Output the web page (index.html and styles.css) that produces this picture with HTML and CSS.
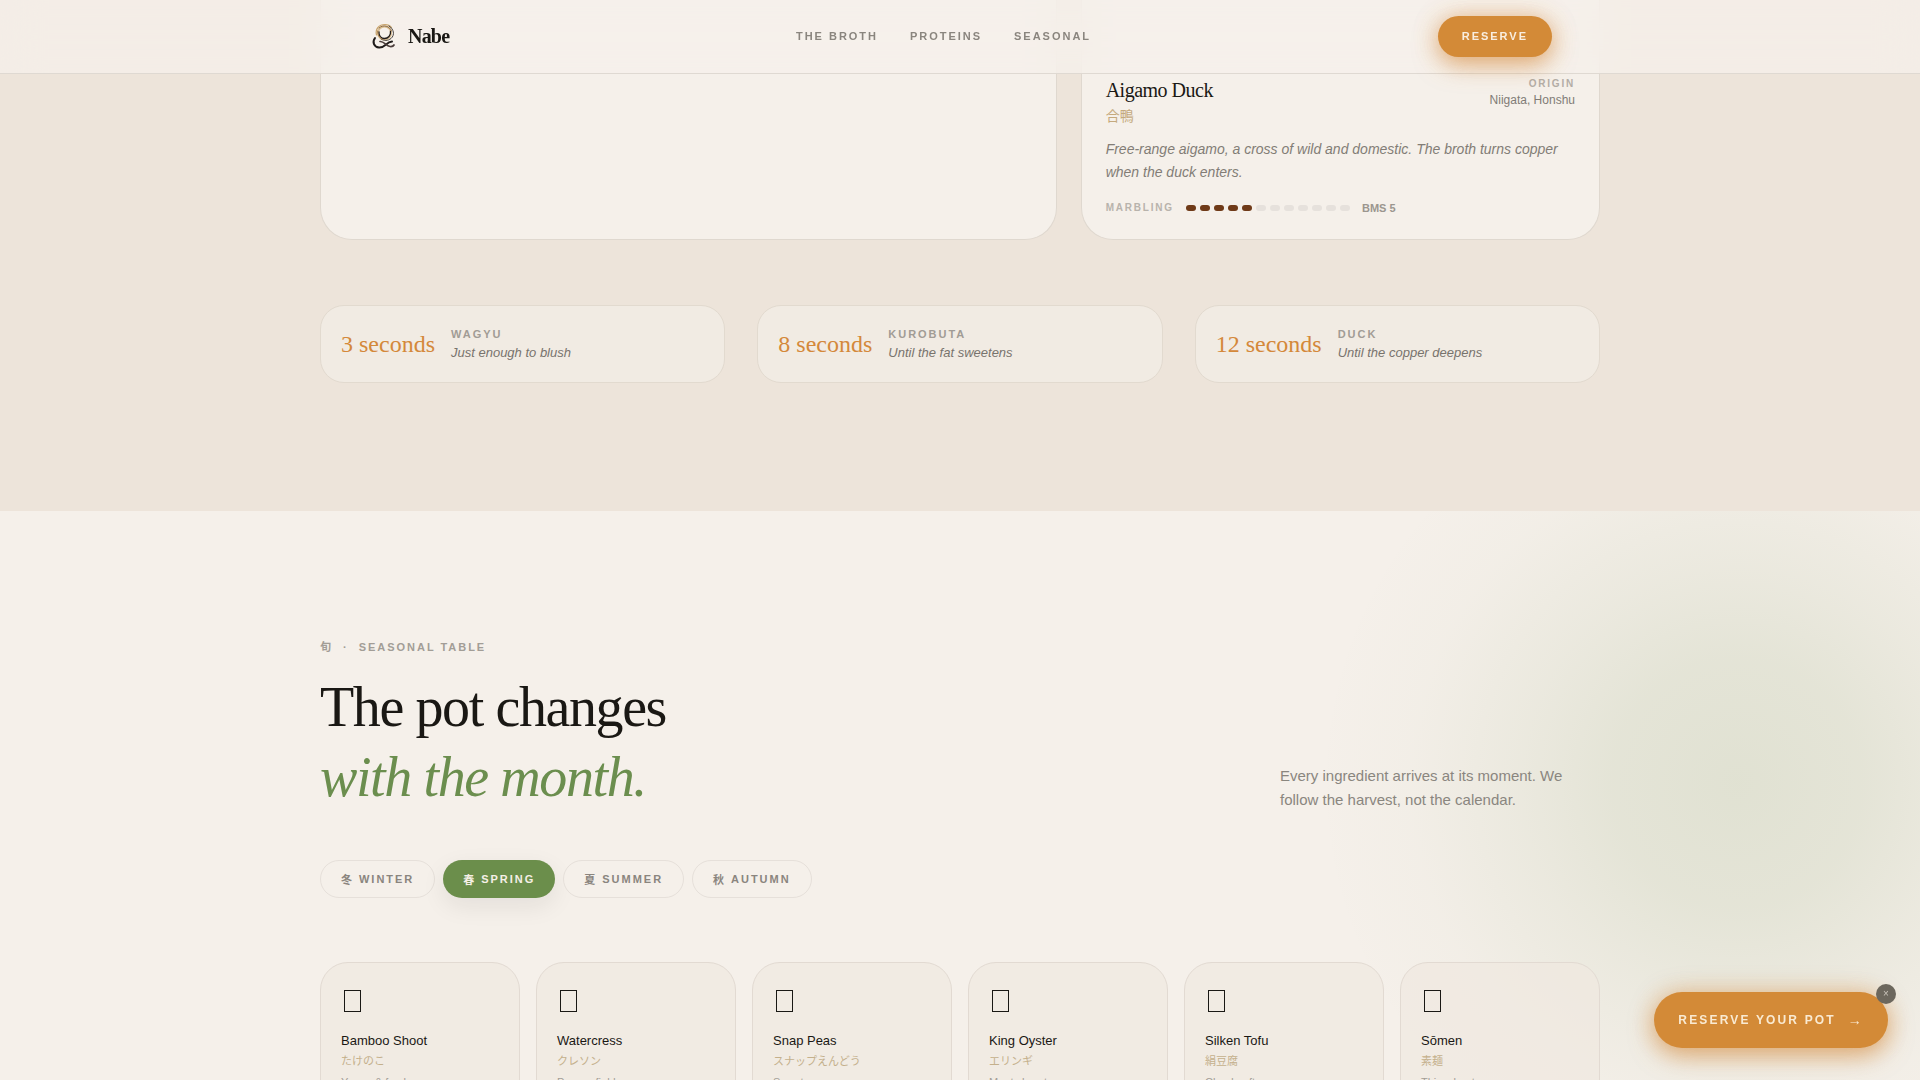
FILE: index.html
```html
<!DOCTYPE html>
<html lang="en">
<head>
    <meta charset="UTF-8">
    <meta name="viewport" content="width=device-width, initial-scale=1.0">
    <title>Nabe</title>
    <link rel="stylesheet" href="styles.css">
</head>
<body>
    <header class="site-header">
        <div class="header-inner">
            <a href="#top" class="brand">
                <svg class="brand-mark" viewBox="0 0 32 32" fill="none" stroke-linecap="round" aria-hidden="true">
                    <circle cx="16.500" cy="12" r="6.500" stroke="#d9bd90" stroke-width="2"/>
                    <path d="M8.500 14C7 8 11 3.500 17 3.500c3 0 5 1 6.500 3" stroke="#c9a46c" stroke-width="1.200"/>
                    <path d="M11 7c4-4 11-2 12.500 3" stroke="#8d6b45" stroke-width="1"/>
                    <path d="M21 5c5 3 6 9 2 12.500-3 2.500-7 2.500-10 .5" stroke="#4a443f" stroke-width="1"/>
                    <path d="M22.500 10.500c.5 4-2.500 7-6 7-3.500 0-6-3-5.500-6.500" stroke="#1f1b1a" stroke-width="1.300"/>
                    <path d="M9.500 10c0 4 2 7 5 8.500" stroke="#a98250" stroke-width="1"/>
                    <path d="M7 17c-3 4-1 9 4 9.500C17 27 18 21 24 20.500" stroke="#1f1b1a" stroke-width="2"/>
                    <path d="M12 20.500c4-.5 6 4.500 10 5 2 .2 3.500-.5 4-1.500" stroke="#4a3c3a" stroke-width="1.700"/>
                </svg>
                <span>Nabe</span>
            </a>
            <nav class="nav">
                <a href="#broth">THE BROTH</a>
                <a href="#proteins">PROTEINS</a>
                <a href="#seasonal">SEASONAL</a>
            </nav>
            <button class="btn-reserve">RESERVE</button>
        </div>
    </header>

    <main id="top">
        <!-- Proteins -->
        <section class="proteins" id="proteins">
            <div class="container">
                <div class="protein-grid">
                    <article class="protein-card protein-large"></article>
                    <article class="protein-card protein-small">
                        <div class="protein-head">
                            <div>
                                <h3>Aigamo Duck</h3>
                                <p class="protein-jp" lang="ja">合鴨</p>
                            </div>
                            <div class="origin">
                                <p class="origin-label">ORIGIN</p>
                                <p class="origin-place">Niigata, Honshu</p>
                            </div>
                        </div>
                        <p class="protein-text">Free-range aigamo, a cross of wild and domestic. The broth turns copper when the duck enters.</p>
                        <div class="marbling">
                            <span class="marbling-label">MARBLING</span>
                            <div class="pips">
                                <i class="on"></i><i class="on"></i><i class="on"></i><i class="on"></i><i class="on"></i><i></i><i></i><i></i><i></i><i></i><i></i><i></i>
                            </div>
                            <span class="bms">BMS 5</span>
                        </div>
                    </article>
                </div>

                <!-- Dip times -->
                <div class="times">
                    <div class="time-card">
                        <span class="time-value">3 seconds</span>
                        <div>
                            <p class="time-name">WAGYU</p>
                            <p class="time-note">Just enough to blush</p>
                        </div>
                    </div>
                    <div class="time-card">
                        <span class="time-value">8 seconds</span>
                        <div>
                            <p class="time-name">KUROBUTA</p>
                            <p class="time-note">Until the fat sweetens</p>
                        </div>
                    </div>
                    <div class="time-card">
                        <span class="time-value">12 seconds</span>
                        <div>
                            <p class="time-name">DUCK</p>
                            <p class="time-note">Until the copper deepens</p>
                        </div>
                    </div>
                </div>
            </div>
        </section>

        <!-- Seasonal table -->
        <section class="seasonal" id="seasonal">
            <div class="container">
                <div class="seasonal-head">
                    <div>
                        <p class="eyebrow"><span lang="ja">旬</span><span>·</span><span>SEASONAL TABLE</span></p>
                        <h2>The pot changes<br><em>with the month.</em></h2>
                    </div>
                    <p class="seasonal-text">Every ingredient arrives at its moment. We follow the harvest, not the calendar.</p>
                </div>

                <div class="tabs">
                    <button class="tab"><span lang="ja">冬</span>WINTER</button>
                    <button class="tab active"><span lang="ja">春</span>SPRING</button>
                    <button class="tab"><span lang="ja">夏</span>SUMMER</button>
                    <button class="tab"><span lang="ja">秋</span>AUTUMN</button>
                </div>

                <div class="ingredients">
                    <article class="ingredient">
                        <span class="glyph"></span>
                        <h4>Bamboo Shoot</h4>
                        <p class="ingredient-jp" lang="ja">たけのこ</p>
                        <p class="ingredient-note">Young &amp; fresh</p>
                    </article>
                    <article class="ingredient">
                        <span class="glyph"></span>
                        <h4>Watercress</h4>
                        <p class="ingredient-jp" lang="ja">クレソン</p>
                        <p class="ingredient-note">Pepper field</p>
                    </article>
                    <article class="ingredient">
                        <span class="glyph"></span>
                        <h4>Snap Peas</h4>
                        <p class="ingredient-jp" lang="ja">スナップえんどう</p>
                        <p class="ingredient-note">Sweet</p>
                    </article>
                    <article class="ingredient">
                        <span class="glyph"></span>
                        <h4>King Oyster</h4>
                        <p class="ingredient-jp" lang="ja">エリンギ</p>
                        <p class="ingredient-note">Meaty heart</p>
                    </article>
                    <article class="ingredient">
                        <span class="glyph"></span>
                        <h4>Silken Tofu</h4>
                        <p class="ingredient-jp" lang="ja">絹豆腐</p>
                        <p class="ingredient-note">Cloud-soft</p>
                    </article>
                    <article class="ingredient">
                        <span class="glyph"></span>
                        <h4>Sōmen</h4>
                        <p class="ingredient-jp" lang="ja">素麺</p>
                        <p class="ingredient-note">Thin wheat</p>
                    </article>
                </div>
            </div>
        </section>
    </main>

    <div class="floating">
        <button class="btn-float">RESERVE YOUR POT <span class="arrow">→</span></button>
        <button class="btn-close" aria-label="Close">×</button>
    </div>
</body>
</html>
```
FILE: styles.css
```css
* {
    box-sizing: border-box;
    margin: 0;
    padding: 0;
}

body {
    font-family: "Liberation Sans", "Noto Sans CJK JP", sans-serif;
    background: #f5f0ea;
    color: #1a1814;
}

button {
    font-family: inherit;
    border: none;
    cursor: pointer;
}

a {
    color: inherit;
    text-decoration: none;
}

.container {
    max-width: 1280px;
    margin: 0 auto;
    position: relative;
}

/* Header */
.site-header {
    position: fixed;
    top: 0;
    left: 0;
    right: 0;
    z-index: 10;
    background: rgba(245, 240, 235, 0.75);
    backdrop-filter: blur(20px);
    border-bottom: 1px solid #dfd9d2;
}

.header-inner {
    max-width: 1280px;
    margin: 0 auto;
    padding: 16px 48px;
    display: flex;
    align-items: center;
    justify-content: space-between;
}

.brand {
    display: flex;
    align-items: center;
    gap: 8px;
    font-family: "Liberation Serif", serif;
    font-size: 20px;
    font-weight: bold;
    letter-spacing: -0.04em;
}

.brand-mark {
    width: 32px;
    height: 32px;
}

.nav {
    display: flex;
    gap: 32px;
    font-size: 11px;
    font-weight: bold;
    line-height: 17px;
    letter-spacing: 0.18em;
    color: #8a857e;
}

.btn-reserve {
    height: 41px;
    padding: 0 24px;
    border-radius: 24px;
    background: #d38a37;
    color: #f9eee0;
    font-size: 11px;
    font-weight: bold;
    line-height: 17px;
    letter-spacing: 0.18em;
    box-shadow: 0 8px 24px rgba(212, 136, 58, 0.55), 0 0 24px rgba(212, 136, 58, 0.35);
}

/* Proteins */
.proteins {
    background: #ede4da;
    padding-bottom: 128px;
}

.protein-grid {
    display: grid;
    grid-template-columns: repeat(12, 1fr);
    gap: 24px;
}

.protein-card {
    background: #f5f0ea;
    border: 1px solid #dfd8cf;
    border-top: none;
    border-radius: 0 0 32px 32px;
    padding: 76px 24px 23px;
}

.protein-large {
    grid-column: span 7;
}

.protein-small {
    grid-column: span 5;
}

.protein-head {
    display: flex;
    justify-content: space-between;
    margin-bottom: 12px;
}

.protein-head h3 {
    font-family: "Liberation Serif", serif;
    font-size: 20px;
    font-weight: normal;
    line-height: 28px;
    letter-spacing: -0.025em;
}

.protein-jp {
    margin-top: 2px;
    font-size: 14px;
    line-height: 20px;
    color: #c4a97d;
}

.origin {
    text-align: right;
}

.origin-label {
    font-size: 10px;
    font-weight: bold;
    line-height: 16px;
    letter-spacing: 0.18em;
    color: #b3ada6;
}

.origin-place {
    font-size: 12px;
    line-height: 17px;
    color: #817c76;
}

.protein-text {
    font-size: 14px;
    font-style: italic;
    line-height: 23px;
    color: #827d76;
    margin-bottom: 16px;
}

.marbling {
    display: flex;
    align-items: center;
    gap: 12px;
    line-height: 16px;
}

.marbling-label {
    font-size: 10px;
    font-weight: bold;
    letter-spacing: 0.18em;
    color: #b8b3ac;
}

.pips {
    display: flex;
    gap: 4px;
}

.pips i {
    width: 10px;
    height: 6px;
    border-radius: 3px;
    background: #e6e1dc;
}

.pips .on {
    background: #6f3a18;
}

.bms {
    font-size: 11px;
    font-weight: bold;
    color: #9b968f;
}

/* Dip times */
.times {
    display: grid;
    grid-template-columns: repeat(3, 1fr);
    gap: 32px;
    margin-top: 65px;
}

.time-card {
    display: flex;
    align-items: center;
    gap: 16px;
    padding: 19px 20px;
    background: #f1ebe3;
    border: 1px solid #e2dacf;
    border-radius: 24px;
}

.time-value {
    font-family: "Liberation Serif", serif;
    font-size: 24px;
    line-height: 38px;
    color: #d4883a;
}

.time-name {
    font-size: 11px;
    font-weight: bold;
    line-height: 18px;
    letter-spacing: 0.18em;
    color: #a19c95;
}

.time-note {
    font-size: 13px;
    font-style: italic;
    line-height: 20px;
    color: #78736d;
}

/* Seasonal table */
.seasonal {
    position: relative;
    overflow: hidden;
    padding: 128px 0;
}

/* green haze behind the right side */
.seasonal::before {
    content: "";
    position: absolute;
    top: -148px;
    right: -237px;
    width: 840px;
    height: 840px;
    border-radius: 50%;
    background: radial-gradient(closest-side, rgba(107, 142, 75, 0.15), rgba(107, 142, 75, 0.12) 30%, rgba(107, 142, 75, 0.07) 52%, rgba(107, 142, 75, 0.02) 78%, rgba(107, 142, 75, 0));
}

.seasonal-head {
    display: flex;
    align-items: flex-end;
    justify-content: space-between;
    margin-bottom: 48px;
}

.eyebrow {
    display: flex;
    gap: 10px;
    font-size: 11px;
    font-weight: bold;
    line-height: 17px;
    letter-spacing: 0.18em;
    color: #a29d96;
    margin-bottom: 16px;
}

.seasonal h2 {
    font-family: "Liberation Serif", serif;
    font-size: 56px;
    font-weight: normal;
    line-height: 70px;
    letter-spacing: -0.025em;
}

.seasonal h2 em {
    color: #6b8e4e;
}

.seasonal-text {
    width: 320px;
    font-size: 15px;
    line-height: 24px;
    color: #8a867f;
}

.tabs {
    display: flex;
    gap: 8px;
    margin-bottom: 64px;
}

.tab {
    display: flex;
    align-items: center;
    gap: 5px;
    height: 38px;
    padding: 0 20px;
    border: 1px solid #e6e0da;
    border-radius: 20px;
    background: #f5f0ea;
    color: #8a857e;
    font-size: 11px;
    font-weight: bold;
    letter-spacing: 0.18em;
}

.tab.active {
    background: #6b8e4b;
    border: none;
    color: #f5f0e6;
    box-shadow: 0 8px 24px rgba(26, 24, 20, 0.08);
}

.ingredients {
    display: grid;
    grid-template-columns: repeat(6, 1fr);
    gap: 16px;
}

.ingredient {
    padding: 24px 20px;
    background: rgba(240, 232, 223, 0.7);
    border: 1px solid #e2dad2;
    border-radius: 28px;
}

/* blank box standing where the ingredient symbol goes */
.glyph {
    display: block;
    width: 17px;
    height: 22px;
    margin: 3px 3px 19px;
    border: 1px solid #1a1814;
}

.ingredient h4 {
    font-size: 13px;
    font-weight: normal;
    line-height: 20px;
}

.ingredient-jp {
    margin-top: 2px;
    font-size: 11px;
    line-height: 17px;
    color: #c4b08c;
}

.ingredient-note {
    margin-top: 4px;
    font-size: 11px;
    line-height: 17px;
    color: #a29d96;
}

/* Floating button */
.floating {
    position: fixed;
    right: 32px;
    bottom: 32px;
    z-index: 20;
}

.btn-float {
    display: flex;
    align-items: center;
    gap: 12px;
    height: 56px;
    padding: 0 24px;
    border-radius: 28px;
    background: #d38a37;
    color: #f9ead2;
    font-size: 12px;
    font-weight: bold;
    letter-spacing: 0.18em;
    box-shadow: 0 8px 24px rgba(212, 136, 58, 0.55), 0 0 24px rgba(212, 136, 58, 0.35);
}

.arrow {
    font-size: 14px;
}

.btn-close {
    position: absolute;
    top: -8px;
    right: -8px;
    width: 20px;
    height: 20px;
    border-radius: 50%;
    background: #6c675d;
    color: #c9c3ba;
    font-size: 10px;
    line-height: 20px;
}
```
